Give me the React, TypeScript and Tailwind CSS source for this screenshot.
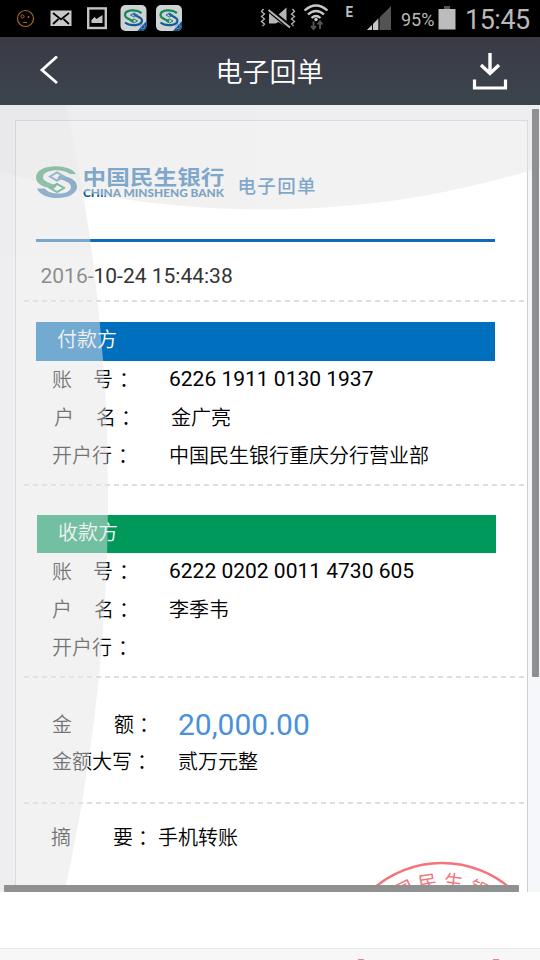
import type { ReactNode } from "react";

function BankAppIcon({ x }: { x: number }) {
  return (
    <g transform={`translate(${x} 5)`}>
      <rect width="26" height="26" rx="5" fill="#cfd3d3" />
      <path d="M21 8C15 3.500 4.500 5 4.500 10C4.500 14 10 14 13 16.500" fill="none" stroke="#128a55" strokeWidth="2.200" />
      <path d="M4.500 17.500C10 22 21.500 20.500 21.500 15.500C21.500 12 16 11.500 13 9" fill="none" stroke="#165a9c" strokeWidth="2.200" />
      <path d="M10 10l3.500-2 3.500 2-3.500 2z" fill="none" stroke="#2273a8" />
      <path d="M10 16l3.500-2 3.500 2-3.500 2z" fill="none" stroke="#128a55" />
      <path d="M26 16v5a5 5 0 0 1-5 5h-4z" fill="#12528f" />
      <circle cx="22" cy="21.500" r="2.200" fill="none" stroke="#6d9bc6" strokeWidth=".8" />
    </g>
  );
}

function StatusBar() {
  return (
    <div className="flex h-[37px] w-full shrink-0 items-center justify-between bg-black text-[#b9b9b9]">
      <svg className="h-[37px] w-[190px]" viewBox="0 0 190 37">
        <circle cx="25.500" cy="18.500" r="8" fill="none" stroke="#a56a24" strokeWidth="1.200" />
        <circle cx="22.500" cy="16.500" r="1.600" fill="none" stroke="#a56a24" />
        <circle cx="28.500" cy="17" r="1" fill="#a56a24" />
        <path d="M23 22.500h4" stroke="#a56a24" />
        <rect x="50.500" y="10.500" width="21" height="15.500" fill="#c9c9c9" />
        <path d="M53 13l8 6.500 8-6.500M53 24l5.500-5M69 24l-5.500-5" fill="none" stroke="#000" strokeWidth="1.700" />
        <rect x="88.200" y="8.400" width="17.600" height="19.600" fill="none" stroke="#c4c4c4" strokeWidth="2.400" />
        <path d="M91.500 23v-3l3-3 2 2 6-4v8z" fill="#c4c4c4" />
        <BankAppIcon x={120.500} />
        <BankAppIcon x={156} />
      </svg>
      <div className="flex h-full items-center pr-[8px] font-['Roboto',sans-serif]">
        <svg className="h-[37px] w-[141px]" viewBox="260 0 141 37">
          <path d="M263.500 9l-2 2.500 3 2.500-3 2.500 3 2.500-3 2.500 3 2.500-2 2M292.500 9l2 2.500-3 2.500 3 2.500-3 2.500 3 2.500-3 2.500 2 2" fill="none" stroke="#b5b5b5" strokeWidth="1.300" />
          <path d="M269 12h4l5 3 8.500-7.500v19.500l-8-5-3 1.500h-6.500z" fill="#b5b5b5" />
          <path d="M268 9l23 19" stroke="#000" strokeWidth="5" />
          <path d="M268.500 10l21.500 17.500" stroke="#b5b5b5" strokeWidth="2" />
          <path d="M304.500 10.500q11.500-10 23 0M308 14.500q8-7 16 0M311.500 18q4.500-4 9 0" fill="none" stroke="#c8c8c8" strokeWidth="2.300" />
          <circle cx="316" cy="19.500" r="1.700" fill="#c8c8c8" />
          <path d="M313.500 21.500v7M311 26l2.500 3 2.500-3M320 29v-7M317.500 24.500l2.500-3 2.500 3" fill="none" stroke="#555" strokeWidth="1.900" />
          <text x="345.500" y="17" fontSize="15.500" fontWeight="700" fill="#bdbdbd" textLength="7.500" lengthAdjust="spacingAndGlyphs">E</text>
          <path d="M391 6v24H367z" fill="#535353" />
          <path d="M378.500 18.500V30H367z" fill="#c6c6c6" />
          <path d="M372.500 23v7M379 17v13" stroke="#000" strokeWidth="1" />
        </svg>
        <span className="w-[37px] pt-[2px] text-[18px]">95%</span>
        <svg className="h-[37px] w-[18px]" viewBox="0 0 18 37">
          <path d="M6 6h6v3H6z" fill="#555" />
          <path d="M.5 9h17v20.500H.5z" fill="#bcbcbc" />
        </svg>
        <span className="ml-[9px] w-[67px] whitespace-nowrap pt-[3px] text-[27px] tracking-[-0.5px]">15:45</span>
      </div>
    </div>
  );
}

function TitleBar() {
  return (
    <header className="flex h-[68px] w-full shrink-0 items-center justify-between bg-linear-to-b from-[#3a3a45] to-[#3b454e] pr-[32px] pl-[39px] text-white">
      <svg className="h-[30px] w-[21px]" viewBox="0 0 21 30">
        <path d="M18 2.500L3 16l15 13" transform="translate(0 -2)" fill="none" stroke="#fff" strokeWidth="2.800" />
      </svg>
      <h1 className="mr-[-8px] ml-[-1px] text-[27px] font-[350]">电子回单</h1>
      <svg className="h-[40px] w-[36px]" viewBox="0 0 36 40">
        <path d="M18 2v20M9 14l9 8.500 9-8.500" fill="none" stroke="#fff" strokeWidth="3.400" />
        <path d="M2.500 28.500V37h31V28.500" fill="none" stroke="#fff" strokeWidth="3.200" />
      </svg>
    </header>
  );
}

function BankLogo() {
  return (
    <svg className="h-[50px] w-[300px] font-['Noto_Sans_CJK_SC',sans-serif]" viewBox="36 155 300 50">
      <path d="M76 174C70 163 36 163 36 177.500C36 185 46 188 54 189L57 185.500C51 183.500 43 182 43 177C43 169 63 168 70 174Z" fill="#3d9f70" />
      <path d="M37 188.500C42 202 77 201 77 186.500C77 179 67 176.500 60 175L57 178.500C63 180 71 182 71 187C71 195 50 196 45 188.500Z" fill="#3a7bb5" />
      <path d="M50 176.500l7-4 7 4-7 4z" fill="none" stroke="#4b8ec0" strokeWidth="2" />
      <path d="M50 188l7-4 7 4-7 4z" fill="none" stroke="#22965b" strokeWidth="2" />
      <text x="82.500" y="185" fontSize="20.500" fontWeight="700" fill="#1769ae" textLength="142" lengthAdjust="spacingAndGlyphs">中国民生银行</text>
      <text x="83" y="197" fontSize="10.500" fontWeight="900" fill="#10609f" fontFamily="Lato, sans-serif" textLength="141" lengthAdjust="spacingAndGlyphs">CHINA MINSHENG BANK</text>
      <text x="237.500" y="193" fontSize="18.500" fontWeight="500" fill="#1769ae" textLength="78">电子回单</text>
    </svg>
  );
}

function Dash() {
  return <div className="ml-[8px] h-[2px] w-[500px] shrink-0 bg-[repeating-linear-gradient(90deg,#dedede_0_5px,transparent_5px_9px)]" />;
}

function Colon() {
  return <span className="w-[20px] pt-[2px] text-center font-['Noto_Sans_CJK_TC',sans-serif]" lang="zh-TW">：</span>;
}

function Digits({ children }: { children: ReactNode }) {
  return <span className="font-['Roboto',sans-serif] text-[21px] font-normal">{children}</span>;
}

function PartyBar({ children, tone }: { children: string; tone: string }) {
  return <div className={`flex w-[459px] shrink-0 items-center pb-[5px] pl-[21px] text-white ${tone}`}>{children}</div>;
}

function Receipt() {
  return (
    <section className="mt-[15px] ml-[15px] flex h-[900px] w-[513px] flex-col border border-[#cdd0d3] bg-white text-[20px] leading-[30px] font-[350] whitespace-nowrap text-black">
      <div className="flex h-[118px] shrink-0 pt-[34px] pl-[20px]">
        <BankLogo />
      </div>
      <div className="ml-[20px] h-[3px] w-[459px] shrink-0 bg-[#0d6bb7]" />
      <div className="flex h-[58px] shrink-0 items-center pt-[10px] pl-[24.5px] text-[#333]">
        <Digits>2016-10-24 15:44:38</Digits>
      </div>
      <Dash />
      <PartyBar tone="mt-[20px] ml-[20px] h-[39px] bg-[#006fbd]">付款方</PartyBar>
      <div className="flex h-[36px] shrink-0 items-center pl-[36px]">
        <span className="w-[41px]">账</span>
        <span className="w-[21px]">号</span>
        <Colon />
        <span className="w-[35px]" />
        <Digits>6226 1911 0130 1937</Digits>
      </div>
      <div className="flex h-[38px] shrink-0 items-center pt-[2px] pl-[38px]">
        <span className="w-[42px]">户</span>
        <span className="w-[20px]">名</span>
        <Colon />
        <span className="ml-[35px]">金广亮</span>
      </div>
      <div className="flex h-[40px] shrink-0 items-center pl-[36px]">
        <span className="w-[61px]">开户行</span>
        <Colon />
        <span className="ml-[36px]">中国民生银行重庆分行营业部</span>
      </div>
      <div className="h-[9px] shrink-0" />
      <Dash />
      <PartyBar tone="mt-[29px] ml-[21px] h-[38px] bg-[#00995c]">收款方</PartyBar>
      <div className="flex h-[36px] shrink-0 items-center pl-[36px]">
        <span className="w-[41px]">账</span>
        <span className="w-[21px]">号</span>
        <Colon />
        <span className="w-[35px]" />
        <Digits>6222 0202 0011 4730 605</Digits>
      </div>
      <div className="flex h-[38px] shrink-0 items-center pt-[2px] pl-[36px]">
        <span className="w-[42px]">户</span>
        <span className="w-[20px]">名</span>
        <Colon />
        <span className="ml-[35px]">李季韦</span>
      </div>
      <div className="flex h-[40px] shrink-0 items-center pl-[36px]">
        <span className="w-[61px]">开户行</span>
        <Colon />
      </div>
      <div className="h-[9px] shrink-0" />
      <Dash />
      <div className="mt-[27px] flex h-[38px] shrink-0 items-center pl-[36px]">
        <span className="w-[62px]">金</span>
        <span className="w-[20px]">额</span>
        <Colon />
        <span className="ml-[24px] pt-[2px] font-['Roboto',sans-serif] text-[30px] font-normal text-[#4a90dc]">20,000.00</span>
      </div>
      <div className="flex h-[36px] shrink-0 items-center pl-[36px]">
        <span className="w-[80px]">金额大写</span>
        <Colon />
        <span className="ml-[26px]">贰万元整</span>
      </div>
      <div className="h-[23px] shrink-0" />
      <Dash />
      <div className="mt-[14px] flex h-[38px] shrink-0 items-center pl-[35px]">
        <span className="w-[62px]">摘</span>
        <span className="w-[20px]">要</span>
        <Colon />
        <span className="ml-[5px]">手机转账</span>
      </div>
    </section>
  );
}

const sealGlyphs = [
  { ch: "国", angle: -26 },
  { ch: "民", angle: -9.5 },
  { ch: "生", angle: 7.5 },
  { ch: "银", angle: 25 },
];

// Bank seal and the two large translucent discs that lie over the receipt.
function Overlay() {
  return (
    <svg className="pointer-events-none absolute inset-0 h-[787px] w-[540px]" viewBox="0 105 540 787">
      <defs>
        <clipPath id="side">
          <circle cx="-1722" cy="495" r="1830" />
        </clipPath>
      </defs>
      <g fontFamily="'Noto Sans CJK SC', sans-serif" fontSize="19" fontWeight="400" fill="#f3747c" textAnchor="middle">
        <circle cx="442" cy="968" r="105" fill="none" stroke="#f3747c" strokeWidth="2.400" />
        {sealGlyphs.map((g) => (
          <text key={g.ch} x="442" y="888" transform={`rotate(${g.angle} 442 968)`}>{g.ch}</text>
        ))}
      </g>
      <g opacity=".5" fill="#e5e5e5">
        <circle cx="-1722" cy="495" r="1830" />
        <circle cx="264" cy="-720" r="929.500" />
      </g>
      <circle cx="264" cy="-720" r="929.500" fill="#000" opacity=".015" clipPath="url(#side)" />
    </svg>
  );
}

export default function App() {
  return (
    <div className="flex h-[960px] w-[540px] flex-col overflow-hidden bg-white font-['Noto_Sans_CJK_SC',sans-serif]" lang="zh-CN">
      <StatusBar />
      <TitleBar />
      <main className="relative h-[787px] shrink-0 overflow-hidden bg-[#f6f7fb]">
        <Receipt />
        <Overlay />
        <div className="absolute top-[4px] right-px h-[568px] w-[7px] rounded-[1px] bg-[#8f9090]" />
        <div className="absolute bottom-0 left-[4px] h-[7px] w-[515px] rounded-[1px] bg-[#8f9090]" />
      </main>
      <div className="h-[56px] shrink-0" />
      <footer className="flex h-[12px] shrink-0 items-end border-t border-[#e8e8e8] bg-[#f7f7f7]">
        <div className="ml-[358px] h-px w-[6px] bg-[#ee7f8d]" />
        <div className="ml-[129px] h-px w-[6px] bg-[#ee7f8d]" />
      </footer>
    </div>
  );
}
